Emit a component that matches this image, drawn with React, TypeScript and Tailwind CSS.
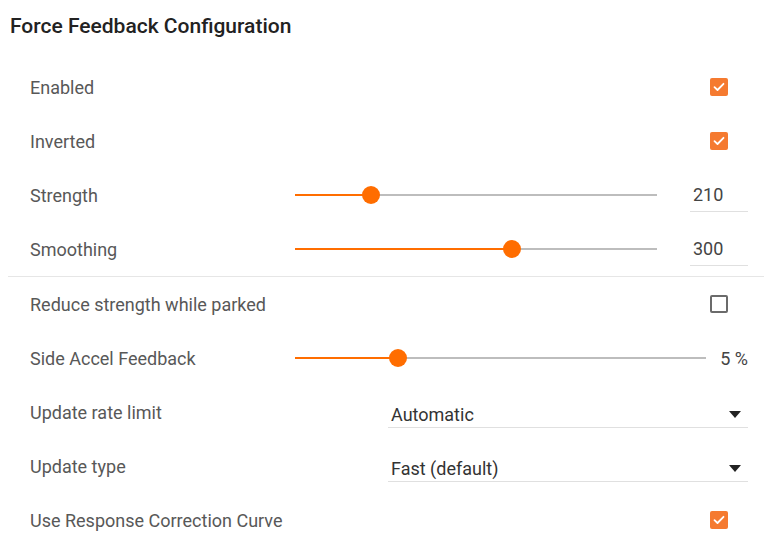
const ORANGE = '#ff6d00';

function Checkbox({ checked }: { checked: boolean }) {
  if (!checked) {
    return <div className="w-[18px] h-[18px] rounded-[2px] border-2 border-[#6b6b6b]" />;
  }
  return (
    <div className="w-[18px] h-[18px] rounded-[2px] bg-[#f57a30] flex items-center justify-center">
      <svg width="12" height="10" viewBox="0 0 12 10" fill="none">
        <path d="M1.5 5.2 L4.5 8 L10.5 1.8" stroke="#fff" strokeWidth="1.8" strokeLinecap="round" strokeLinejoin="round" />
      </svg>
    </div>
  );
}

function Slider({ percent }: { percent: number }) {
  return (
    <div className="relative flex-1 h-[18px] flex items-center">
      <div className="w-full h-[2px] bg-[#bdbdbd]" />
      <div className="absolute left-0 top-[8px] h-[2px] bg-[#ff6d00]" style={{ width: `${percent}%` }} />
      <div
        className="absolute top-0 w-[18px] h-[18px] -ml-[9px] rounded-full bg-[#ff6d00]"
        style={{ left: `${percent}%`, backgroundColor: ORANGE }}
      />
    </div>
  );
}

function Select({ value }: { value: string }) {
  return (
    <div className="ml-[93px] flex-1 h-[32px] pt-[6px] flex items-center justify-between border-b border-[#e0e0e0] pl-[3px] pr-[7px]">
      <span className="text-[18px] text-[#333]">{value}</span>
      <svg width="12" height="7" viewBox="0 0 12 7">
        <path d="M0 0 H12 L6 7 Z" fill="#222" />
      </svg>
    </div>
  );
}

function Row({ label, children, divider }: { label: string; children: React.ReactNode; divider?: boolean }) {
  return (
    <div className={divider ? 'border-b border-[#e6e6e6]' : ''}>
      <div className="h-[54px] flex items-center pl-[22px] pr-[16px]">
        <div className="w-[265px] shrink-0 text-[18px] text-[#585858]">{label}</div>
        <div className="flex-1 flex items-center">{children}</div>
      </div>
    </div>
  );
}

function CheckCell({ checked }: { checked: boolean }) {
  return (
    <div className="ml-auto w-[58px] flex justify-center">
      <Checkbox checked={checked} />
    </div>
  );
}

function ValueCell({ value }: { value: string }) {
  return (
    <div className="ml-[33px] w-[58px] h-[34px] flex items-center border-b border-[#e0e0e0] pl-[3px] text-[18px] text-[#444]">
      {value}
    </div>
  );
}

export default function App() {
  return (
    <div className="w-[772px] h-[545px] bg-white overflow-hidden font-['Roboto',sans-serif]">
      <div className="px-[8px]">
        <div className="h-[60px] pt-[13px] pl-[2px] text-[21px] leading-[26px] font-medium text-[#222]">
          Force Feedback Configuration
        </div>

        <Row label="Enabled">
          <CheckCell checked />
        </Row>
        <Row label="Inverted">
          <CheckCell checked />
        </Row>
        <Row label="Strength">
          <Slider percent={21} />
          <ValueCell value="210" />
        </Row>
        <Row label="Smoothing" divider>
          <Slider percent={60} />
          <ValueCell value="300" />
        </Row>

        <Row label="Reduce strength while parked">
          <CheckCell checked={false} />
        </Row>
        <Row label="Side Accel Feedback">
          <Slider percent={25} />
          <div className="w-[42px] text-right text-[18px] text-[#444]">5 %</div>
        </Row>
        <Row label="Update rate limit">
          <Select value="Automatic" />
        </Row>
        <Row label="Update type">
          <Select value="Fast (default)" />
        </Row>
        <Row label="Use Response Correction Curve">
          <CheckCell checked />
        </Row>
      </div>
    </div>
  );
}
